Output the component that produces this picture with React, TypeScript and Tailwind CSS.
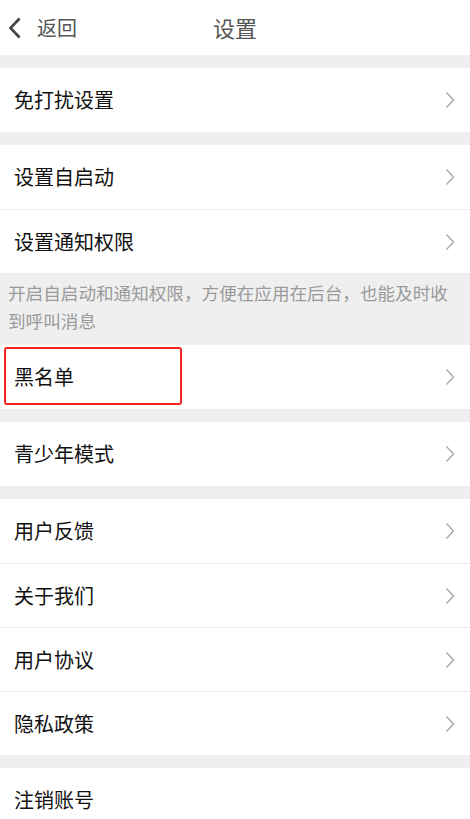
import React from "react";

const Chevron = () => (
  <svg width="10" height="18" viewBox="0 0 10 18" fill="none">
    <path d="M1.5 1.5 L8.5 9 L1.5 16.5" stroke="#a8a8a8" strokeWidth="1.4" />
  </svg>
);

const Row = ({ label, divider, chevron = true, boxed }: { label: string; divider?: boolean; chevron?: boolean; boxed?: boolean }) => (
  <div className={`relative flex h-[64px] items-center justify-between bg-white pl-[14px] pr-[15px] ${divider ? "border-t border-[#ececec]" : ""}`}>
    <span className="text-[20px] text-[#111]">{label}</span>
    {chevron && <Chevron />}
    {boxed && <div className="absolute left-[4px] top-[2px] h-[58px] w-[178px] rounded-[3px] border-2 border-[#f0261f]" />}
  </div>
);

const Gap = () => <div className="h-[13px] bg-[#efefef]" />;

export default function App() {
  return (
    <div className="h-[819px] w-[470px] overflow-hidden bg-[#efefef]" style={{ fontFamily: '"Noto Sans CJK SC", "Noto Sans", sans-serif' }}>
      <div className="relative flex h-[55px] items-center bg-white">
        <div className="flex items-center pl-[8px]">
          <svg width="14" height="22" viewBox="0 0 14 22" fill="none">
            <path d="M11.5 1.5 L2.5 11 L11.5 20.5" stroke="#444" strokeWidth="2.6" />
          </svg>
          <span className="ml-[15px] text-[20px] text-[#555]">返回</span>
        </div>
        <div className="absolute left-0 right-0 top-0 flex h-[55px] items-center justify-center">
          <span className="text-[22px] text-[#555]">设置</span>
        </div>
      </div>
      <Gap />
      <Row label="免打扰设置" />
      <Gap />
      <Row label="设置自启动" />
      <Row label="设置通知权限" divider />
      <div className="bg-[#efefef] px-[8px] pb-[10px] pt-[6px] text-[17.6px] leading-[28px] text-[#9a9a9a]">
        开启自启动和通知权限，方便在应用在后台，也能及时收到呼叫消息
      </div>
      <Row label="黑名单" boxed />
      <Gap />
      <Row label="青少年模式" />
      <Gap />
      <Row label="用户反馈" />
      <Row label="关于我们" divider />
      <Row label="用户协议" divider />
      <Row label="隐私政策" divider />
      <Gap />
      <Row label="注销账号" chevron={false} />
    </div>
  );
}
